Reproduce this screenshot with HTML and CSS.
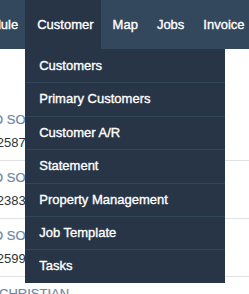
FILE: index.html
```
<html>
    <head>
        <meta charset="UTF-8">
        <title>Customers</title>
        <link rel="stylesheet" href="styles.css">
    </head>
    <body>
        <div class="navbar">
            <div class="nav-item">Schedule</div>
            <div class="nav-item active">
                Customer
                <div class="dropdown">
                    <div class="dropdown-item">Customers</div>
                    <div class="dropdown-item">Primary Customers</div>
                    <div class="dropdown-item">Customer A/R</div>
                    <div class="dropdown-item">Statement</div>
                    <div class="dropdown-item">Property Management</div>
                    <div class="dropdown-item">Job Template</div>
                    <div class="dropdown-item">Tasks</div>
                </div>
            </div>
            <div class="nav-item">Map</div>
            <div class="nav-item">Jobs</div>
            <div class="nav-item">Invoice</div>
        </div>
        <div class="list">
            <div class="row">
                <p class="name">ECO SOLUTIONS</p>
                <p class="phone">0302587</p>
            </div>
            <div class="row">
                <p class="name">ECO SOLUTIONS</p>
                <p class="phone">0302383</p>
            </div>
            <div class="row">
                <p class="name">ECO SOLUTIONS</p>
                <p class="phone">0302599</p>
            </div>
            <div class="row">
                <p class="name short">CHRISTIAN</p>
                <p class="phone">0302111</p>
            </div>
        </div>
    </body>
</html>
```

FILE: styles.css
```
html, body {
    margin: 0;
    padding: 0;
    height: 100%;
    overflow: hidden;
    background: #fff;
    font-family: "Liberation Sans", Arial, sans-serif;
}
p {
    margin: 0;
    padding: 0;
}
.navbar {
    display: flex;
    height: 49px;
    margin-left: -48px;
    background: #34485d;
}
.nav-item {
    position: relative;
    padding: 0 7px 0 12px;
    line-height: 49px;
    font-size: 13px;
    color: #fff;
    -webkit-text-stroke: 0.35px #fff;
    white-space: nowrap;
}
.nav-item.active {
    background: #283546;
}
.dropdown {
    z-index: 99;
    position: absolute;
    top: 49px;
    left: 0;
    width: 200px;
    padding-top: 1px;
    background: #283546;
}
.dropdown-item {
    height: 32.4px;
    line-height: 32.4px;
    padding-left: 14px;
    border-bottom: 1px solid #33475b;
}
.dropdown-item:last-child {
    border-bottom: none;
}
.list {
    padding-top: 54px;
}
.row {
    height: 58px;
    padding-top: 8px;
    box-sizing: border-box;
    border-bottom: 1px solid #e2e2e2;
}
.row .name, .row .phone {
    margin-left: -25px;
    line-height: 18px;
    font-size: 13px;
    white-space: nowrap;
}
.row .name {
    color: #6e86a9;
    -webkit-text-stroke: 0.2px #6e86a9;
}
.row .name.short {
    margin-left: -1px;
}
.row .phone {
    margin-top: 5px;
    color: #333;
}
```
